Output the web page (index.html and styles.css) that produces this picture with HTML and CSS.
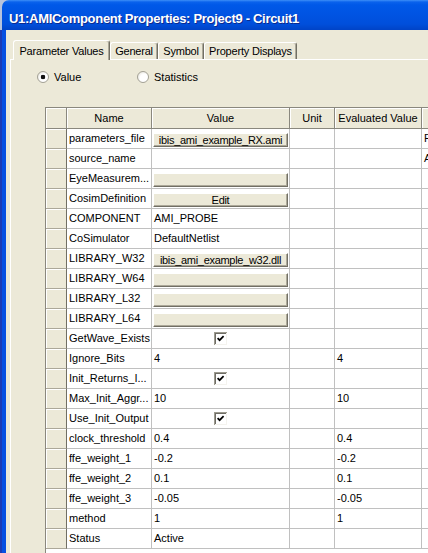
FILE: index.html
```html
<!DOCTYPE html>
<html>
<head>
<meta charset="utf-8">
<link rel="stylesheet" href="styles.css">
</head>
<body>
<div class="window">
  <div class="titlebar"><span class="title">U1:AMIComponent Properties: Project9 - Circuit1</span></div>
  <div class="frame">
    <div class="tabs">
      <div class="tab active w-pv">Parameter Values</div>
      <div class="tab w-gen">General</div>
      <div class="tab w-sym">Symbol</div>
      <div class="tab w-pd">Property Displays</div>
    </div>
    <div class="panel">
      <div class="radios">
        <div class="radio opt-value"><span class="dot on"></span>Value</div>
        <div class="radio"><span class="dot"></span>Statistics</div>
      </div>
      <div class="grid-wrap">
        <div class="grid">
          <div class="hd"></div><div class="hd">Name</div><div class="hd">Value</div><div class="hd">Unit</div><div class="hd">Evaluated Value</div><div class="hd"></div>

          <div class="rh"></div><div>parameters_file</div><div class="bc"><div class="btn">ibis_ami_example_RX.ami</div></div><div></div><div></div><div>F</div>
          <div class="rh"></div><div>source_name</div><div></div><div></div><div></div><div>A</div>
          <div class="rh"></div><div>EyeMeasurem...</div><div class="bc"><div class="btn"></div></div><div></div><div></div><div></div>
          <div class="rh"></div><div>CosimDefinition</div><div class="bc"><div class="btn">Edit</div></div><div></div><div></div><div></div>
          <div class="rh"></div><div>COMPONENT</div><div>AMI_PROBE</div><div></div><div></div><div></div>
          <div class="rh"></div><div>CoSimulator</div><div>DefaultNetlist</div><div></div><div></div><div></div>
          <div class="rh"></div><div>LIBRARY_W32</div><div class="bc"><div class="btn">ibis_ami_example_w32.dll</div></div><div></div><div></div><div></div>
          <div class="rh"></div><div>LIBRARY_W64</div><div class="bc"><div class="btn"></div></div><div></div><div></div><div></div>
          <div class="rh"></div><div>LIBRARY_L32</div><div class="bc"><div class="btn"></div></div><div></div><div></div><div></div>
          <div class="rh"></div><div>LIBRARY_L64</div><div class="bc"><div class="btn"></div></div><div></div><div></div><div></div>
          <div class="rh"></div><div>GetWave_Exists</div><div class="kc"><svg class="cb" width="13" height="13" viewBox="0 0 13 13"><rect x="0" y="0" width="13" height="13" fill="#f4f3ee"/><rect x="0" y="0" width="13" height="1" fill="#9d9b90"/><rect x="0" y="0" width="1" height="13" fill="#9d9b90"/><rect x="1" y="1" width="11" height="1" fill="#6e6c64"/><rect x="1" y="1" width="1" height="11" fill="#6e6c64"/><rect x="2" y="2" width="10" height="10" fill="#fff"/><polyline points="3.6,6.2 5.6,8.2 9.6,4.2" fill="none" stroke="#000" stroke-width="1.7"/></svg></div><div></div><div></div><div></div>
          <div class="rh"></div><div>Ignore_Bits</div><div>4</div><div></div><div>4</div><div></div>
          <div class="rh"></div><div>Init_Returns_I...</div><div class="kc"><svg class="cb" width="13" height="13" viewBox="0 0 13 13"><rect x="0" y="0" width="13" height="13" fill="#f4f3ee"/><rect x="0" y="0" width="13" height="1" fill="#9d9b90"/><rect x="0" y="0" width="1" height="13" fill="#9d9b90"/><rect x="1" y="1" width="11" height="1" fill="#6e6c64"/><rect x="1" y="1" width="1" height="11" fill="#6e6c64"/><rect x="2" y="2" width="10" height="10" fill="#fff"/><polyline points="3.6,6.2 5.6,8.2 9.6,4.2" fill="none" stroke="#000" stroke-width="1.7"/></svg></div><div></div><div></div><div></div>
          <div class="rh"></div><div>Max_Init_Aggr...</div><div>10</div><div></div><div>10</div><div></div>
          <div class="rh"></div><div>Use_Init_Output</div><div class="kc"><svg class="cb" width="13" height="13" viewBox="0 0 13 13"><rect x="0" y="0" width="13" height="13" fill="#f4f3ee"/><rect x="0" y="0" width="13" height="1" fill="#9d9b90"/><rect x="0" y="0" width="1" height="13" fill="#9d9b90"/><rect x="1" y="1" width="11" height="1" fill="#6e6c64"/><rect x="1" y="1" width="1" height="11" fill="#6e6c64"/><rect x="2" y="2" width="10" height="10" fill="#fff"/><polyline points="3.6,6.2 5.6,8.2 9.6,4.2" fill="none" stroke="#000" stroke-width="1.7"/></svg></div><div></div><div></div><div></div>
          <div class="rh"></div><div>clock_threshold</div><div>0.4</div><div></div><div>0.4</div><div></div>
          <div class="rh"></div><div>ffe_weight_1</div><div>-0.2</div><div></div><div>-0.2</div><div></div>
          <div class="rh"></div><div>ffe_weight_2</div><div>0.1</div><div></div><div>0.1</div><div></div>
          <div class="rh"></div><div>ffe_weight_3</div><div>-0.05</div><div></div><div>-0.05</div><div></div>
          <div class="rh"></div><div>method</div><div>1</div><div></div><div>1</div><div></div>
          <div class="rh"></div><div>Status</div><div>Active</div><div></div><div></div><div></div>
        </div>
      </div>
    </div>
  </div>
</div>
</body>
</html>
```
FILE: styles.css
```css
html, body {
  margin: 0;
  padding: 0;
}
body {
  width: 428px;
  height: 553px;
  overflow: hidden;
  font-family: "Liberation Sans", Arial, sans-serif;
  font-size: 11px;
  color: #000;
  background: linear-gradient(#b7c3dc 0, #b7c3dc 30px, #1b3bb5 30px);
}
.window {
  margin-left: 2px;
  height: 553px;
  overflow: hidden;
}
.titlebar {
  height: 30px;
  box-sizing: border-box;
  padding: 11px 0 0 7px;
  border-top-left-radius: 7px;
  background: linear-gradient(to bottom, #3d8ff7 0, #0a62ec 2px, #0058e8 5px, #0054e3 45%, #004fdb 80%, #0043c6 100%);
  white-space: nowrap;
}
.title {
  color: #fff;
  font-weight: bold;
  font-size: 13px;
  letter-spacing: -0.3px;
  line-height: 16px;
  text-shadow: 1px 1px 0 #0c2a8f;
}
.frame {
  height: 523px;
  box-sizing: border-box;
  border-left: 4px solid #0750e2;
  background: #ece9d8;
  padding: 10px 0 0 4px;
}
.tabs {
  display: flex;
  align-items: flex-end;
  height: 19px;
  padding-left: 3px;
  position: relative;
  z-index: 1;
}
.tab {
  box-sizing: border-box;
  height: 17px;
  display: flex;
  align-items: center;
  justify-content: center;
  border-top: 1px solid #fff;
  border-left: 1px solid #fff;
  border-right: 1px solid #716f64;
  border-radius: 3px 3px 0 0;
  box-shadow: inset -1px 0 0 #aca899;
  background: #ece9d8;
  white-space: nowrap;
  letter-spacing: -0.2px;
}
.tab.active {
  height: 20px;
  margin-bottom: -1px;
}
.w-pv { width: 97px; }
.w-gen { width: 48px; }
.w-sym { width: 46px; }
.w-pd { width: 93px; }
.panel {
  height: 500px;
  border-top: 1px solid #fff;
  border-left: 1px solid #fff;
  background: #ece9d8;
  overflow: hidden;
}
.radios {
  display: flex;
  align-items: center;
  height: 12px;
  margin-top: 11px;
  padding-left: 26px;
}
.radio {
  display: flex;
  align-items: center;
  gap: 5px;
}
.opt-value {
  width: 100px;
}
.dot {
  width: 12px;
  height: 12px;
  box-sizing: border-box;
  border-radius: 50%;
  border: 1px solid #a3a195;
  background: radial-gradient(circle at 62% 62%, #ffffff 0, #ffffff 45%, #dedbcf 100%);
}
.dot.on {
  background: radial-gradient(circle at 50% 50%, #111 0, #111 2px, rgba(0,0,0,0) 2.6px),
              radial-gradient(circle at 62% 62%, #ffffff 0, #ffffff 45%, #dedbcf 100%);
}
.grid-wrap {
  margin-top: 24px;
  margin-left: 34px;
  width: 480px;
  height: 460px;
  background: #fff;
  border-left: 1px solid #8a887e;
  border-top: 1px solid #8a887e;
}
.grid {
  display: grid;
  grid-template-columns: 21px 85px 138px 45px 87px 90px;
  grid-template-rows: 21px;
  grid-auto-rows: 20px;
}
.grid > div {
  box-sizing: border-box;
  border-right: 1px solid #c0c0c0;
  border-bottom: 1px solid #c0c0c0;
  padding-left: 2px;
  line-height: 19px;
  white-space: nowrap;
  overflow: hidden;
}
.grid > .hd {
  background: #ece9d8;
  border-right-color: #8a887e;
  border-bottom-color: #8a887e;
  box-shadow: inset 1px 1px 0 #fff;
  text-align: center;
  line-height: 20px;
  padding-left: 0;
}
.grid > .rh {
  background: #ece9d8;
  border-right-color: #716f64;
  border-bottom-color: #aca899;
  box-shadow: inset 1px 1px 0 #fff;
  padding-left: 0;
}
.grid > .bc {
  padding: 4px 1px 1px 1px;
}
.btn {
  box-sizing: border-box;
  height: 14px;
  border: 1px solid;
  border-color: #fff #716f64 #716f64 #fff;
  box-shadow: inset -1px -1px 0 #aca899;
  background: #ece9d8;
  text-align: center;
  line-height: 12px;
  letter-spacing: -0.3px;
  overflow: hidden;
}
.grid > .kc {
  display: flex;
  justify-content: center;
  align-items: flex-start;
  padding: 3px 0 0 0;
}
.cb {
  display: block;
}
```
